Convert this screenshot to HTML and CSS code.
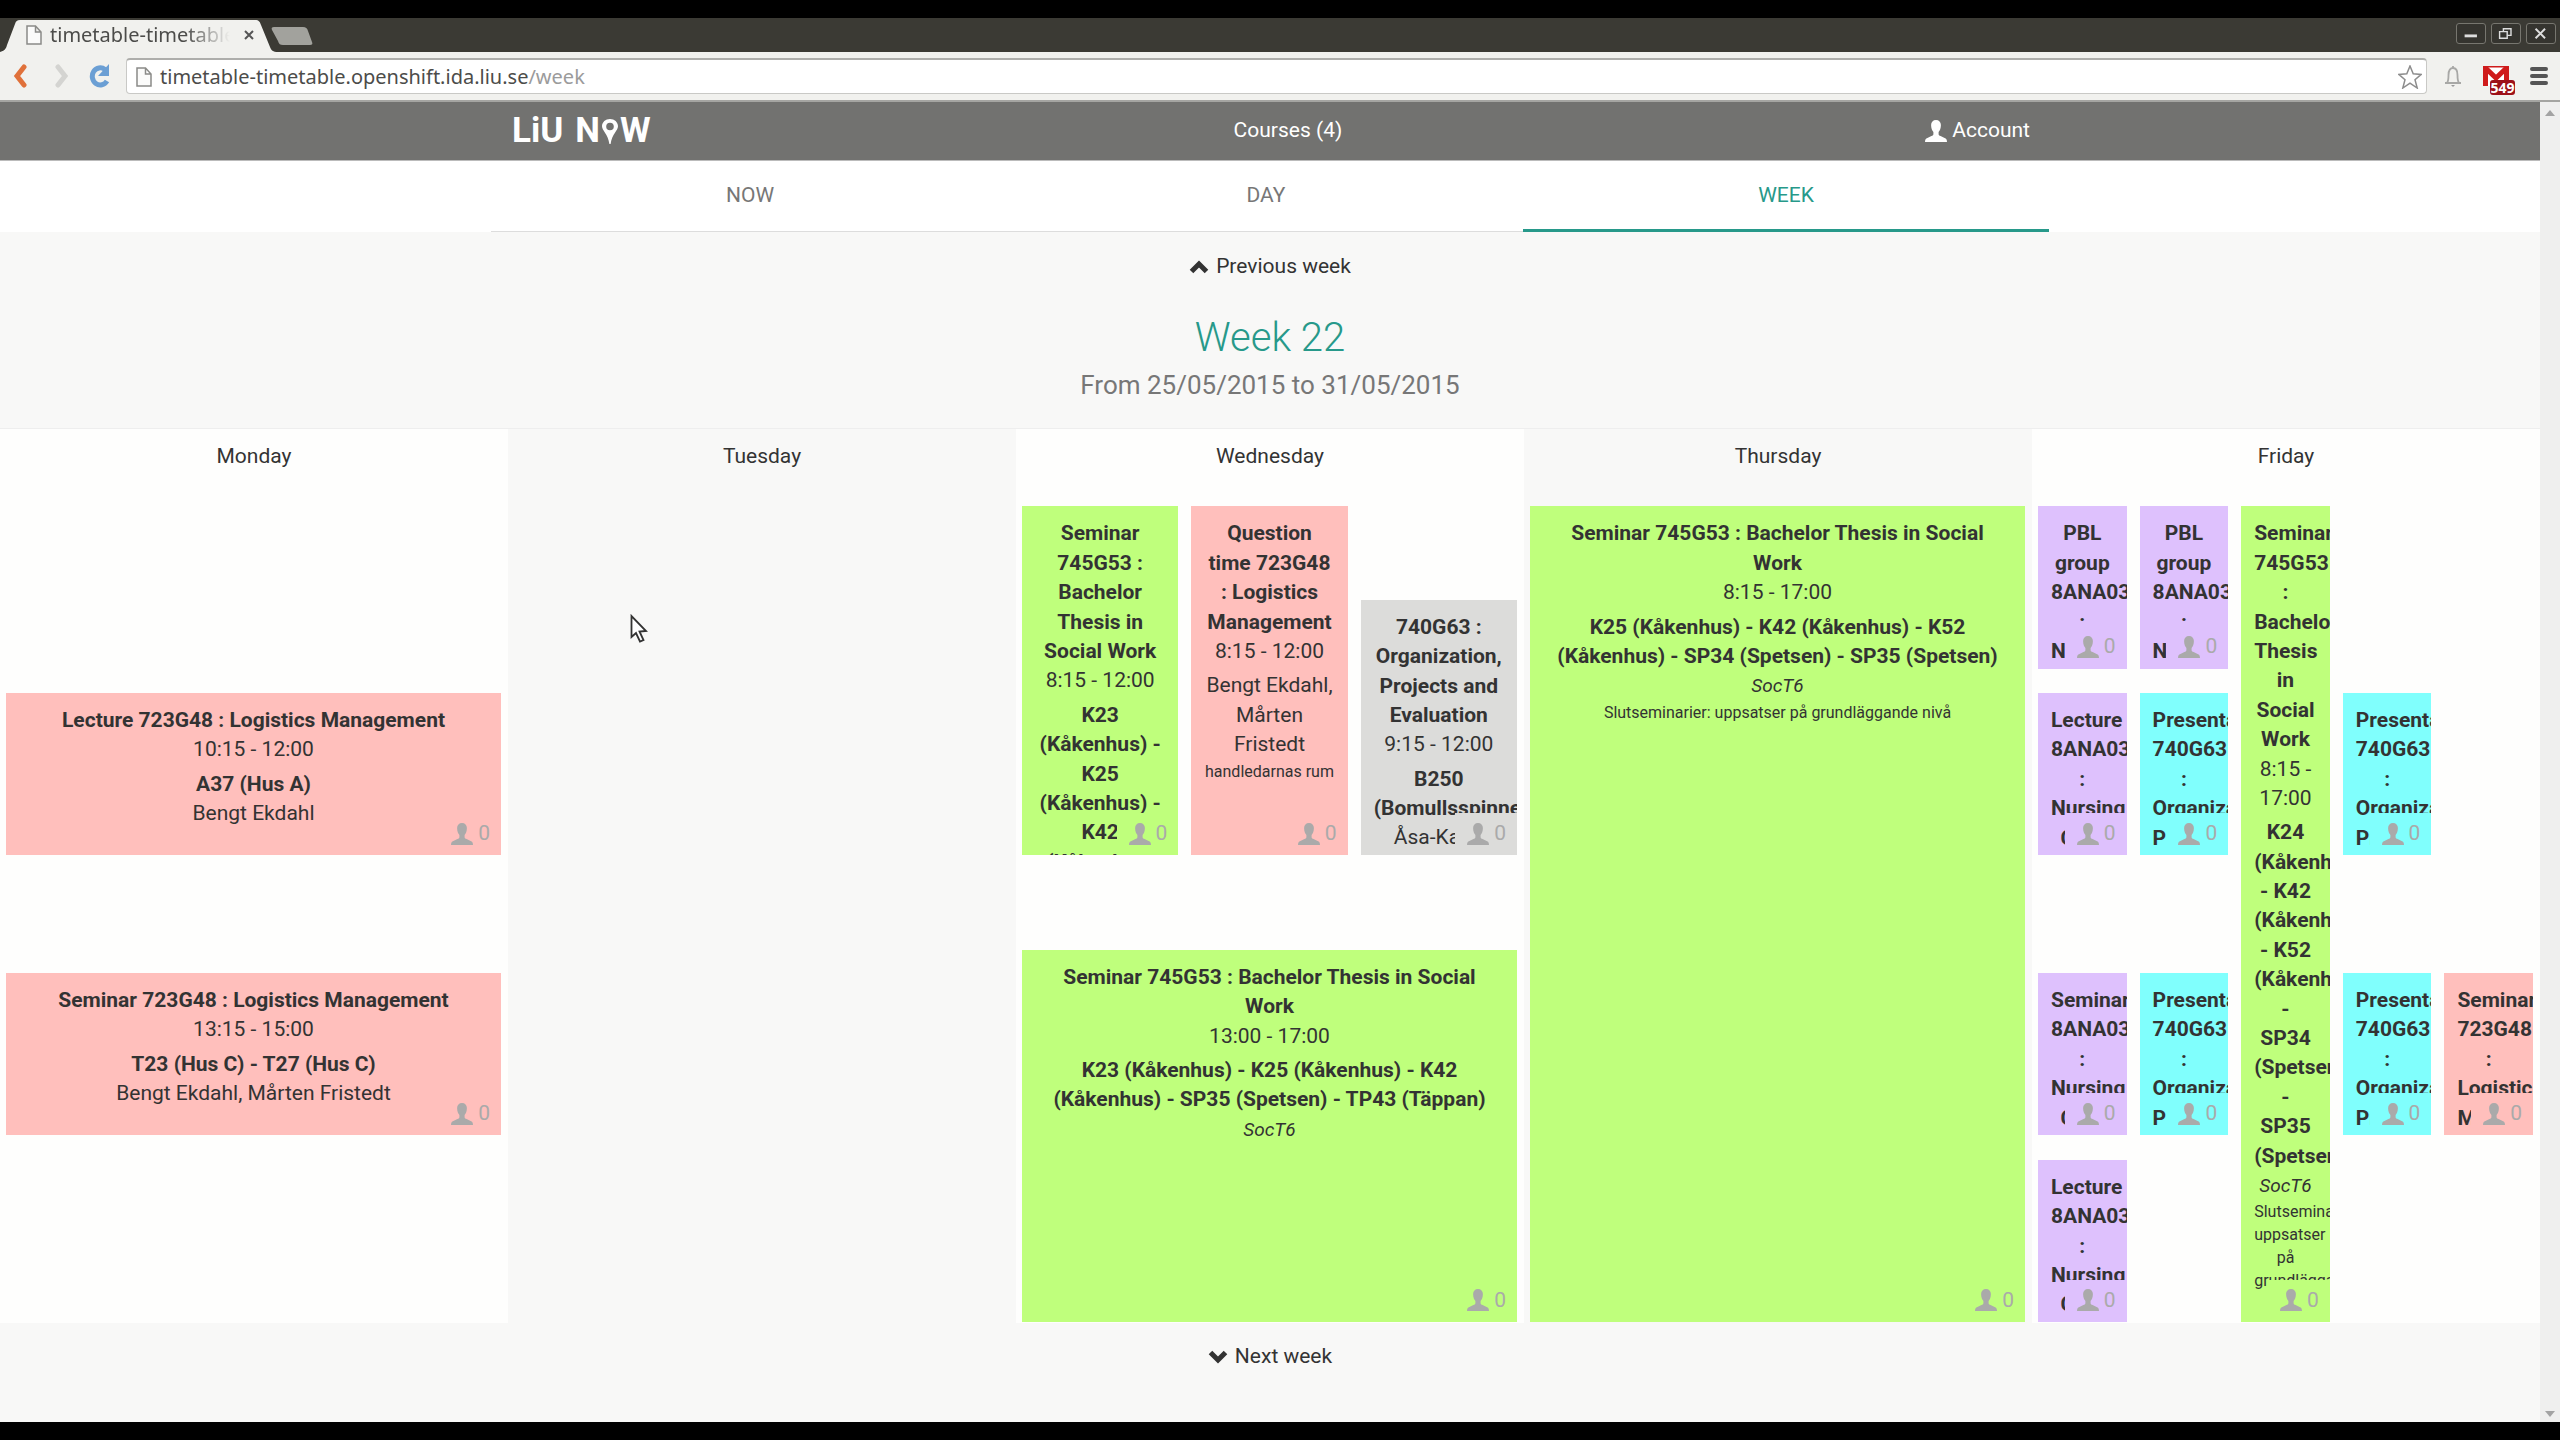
FILE: index.html
```html
<!DOCTYPE html>
<html lang="en">
<head>
<meta charset="utf-8">
<title>LiU Now</title>
<link rel="stylesheet" href="styles.css">
</head>
<body>
<svg class="defs" aria-hidden="true">
  <symbol id="user" viewBox="0 0 22 22"><path d="M11 0c3 0 4.900 2 4.900 5 0 3.200-1 5.600-2.300 7v2c0 1 .6 1.500 2 2.100l4 1.800c1.600.7 2.400 1.500 2.400 4.100H0c0-2.600.8-3.400 2.400-4.100l4-1.800c1.400-.6 2-1.100 2-2.100v-2C7.100 10.600 6.100 8.200 6.100 5c0-3 1.900-5 4.900-5z" fill="currentColor"/></symbol>
  <symbol id="page" viewBox="0 0 16 20"><path d="M1 1h8.500L15 7v12H1zM9.500 1v6H15" fill="#fbfbfa" stroke="#8b8b88" stroke-width="1.500"/></symbol>
</svg>

<div class="frame-edge"></div>
<header class="browser">
  <div class="titlebar">
    <div class="tab">
      <svg class="tab-shape" viewBox="0 0 278 34" preserveAspectRatio="none" aria-hidden="true"><path d="M0 34c4-1 6-3 7-7L15 6c1-3 2-4 5-4h235c4 0 5 2 6 5l9 22c1 3 3 5 8 5z" fill="#f1f1ee"/></svg>
      <svg class="page-icon"><use href="#page"/></svg>
      <span class="tab-title">timetable-timetable</span>
      <button class="tab-close" aria-label="Close tab"><svg viewBox="0 0 10 10"><path d="M1 1l8 8M9 1L1 9" stroke="#555" stroke-width="2"/></svg></button>
    </div>
    <button class="new-tab" aria-label="New tab"><svg viewBox="0 0 42 20"><path d="M3 1h29c3 0 4 1 5 4l4 11c1 2 0 3-2 3H12c-3 0-4-1-5-4L1 4c-1-2 0-3 2-3z" fill="#a2a29d"/></svg></button>
    <div class="window-buttons">
      <button aria-label="Minimise"><svg viewBox="0 0 28 20"><path d="M8 12.500h13" stroke="#ddd" stroke-width="3"/></svg></button>
      <button aria-label="Restore"><svg viewBox="0 0 28 20"><path d="M8 8h8v7H8zM12 8V5h8v7h-4" fill="none" stroke="#ddd" stroke-width="1.500"/></svg></button>
      <button aria-label="Close"><svg viewBox="0 0 28 20"><path d="M9 5l10 10M19 5L9 15" stroke="#ddd" stroke-width="2"/></svg></button>
    </div>
  </div>
  <div class="toolbar">
    <div class="nav-buttons">
      <button aria-label="Back"><svg viewBox="0 0 24 24"><path d="M15 3L8 12l7 9" fill="none" stroke="#e0713a" stroke-width="5" stroke-linecap="round"/></svg></button>
      <button aria-label="Forward"><svg viewBox="0 0 24 24"><path d="M10 3l7 9-7 9" fill="none" stroke="#d4d4d1" stroke-width="5" stroke-linecap="round"/></svg></button>
      <button aria-label="Reload"><svg viewBox="0 0 24 24"><path d="M18 5.500A8 8.500 0 1 0 20 17" fill="none" stroke="#6b9fd4" stroke-width="5"/><path d="M22 0v12H11z" fill="#6b9fd4"/></svg></button>
    </div>
    <div class="address">
      <svg class="page-icon"><use href="#page"/></svg>
      <a class="url" href="#">timetable-timetable.openshift.ida.liu.se<span>/week</span></a>
      <button aria-label="Bookmark"><svg viewBox="0 0 24 24"><path d="M12 1l3.200 7.800 8 .6-6.200 5.300 2.200 8.300L12 18.200 4.800 23 7 14.700.8 9.400l8-.6z" fill="#fff" stroke="#8d8d8d" stroke-width="1.500"/></svg></button>
    </div>
    <div class="extensions">
      <button aria-label="Notifications"><svg viewBox="0 0 24 24"><path d="M12 2v2M4 19h16M6 19c1.500-2 1.500-4 1.500-8 0-5 2-7 4.500-7s4.500 2 4.500 7c0 4 0 6 1.500 8" fill="none" stroke="#a8a8a6" stroke-width="1.800"/><path d="M10 21h4l-2 2z" fill="#999"/></svg></button>
      <button class="mail" aria-label="Mail"><svg viewBox="0 0 26 20"><path d="M0 0h26v20H0z" fill="#fff"/><path d="M2.500 20V2L13 12 23.500 2v18" fill="none" stroke="#cf1b1b" stroke-width="5"/><path d="M0 0h26v1.500H0z" fill="#cf1b1b"/></svg><span class="mail-count">549</span></button>
      <button aria-label="Menu"><svg viewBox="0 0 24 24"><path d="M5 5h14M5 12h14M5 19h14" stroke="#555" stroke-width="4" stroke-linecap="round"/></svg></button>
    </div>
  </div>
</header>

<div class="viewport">
  <div class="page">
    <nav class="navbar">
      <div class="container navbar-inner">
        <a class="logo" href="#" aria-label="LiU Now"><span>LiU</span><span class="logo-now">N<svg viewBox="0 0 16 25" aria-hidden="true"><path fill-rule="evenodd" d="M8 0c4.500 0 8 3.200 8 7.300C16 11.500 10 15 8.600 25H7.400C6 15 0 11.500 0 7.300 0 3.200 3.500 0 8 0zm0 3.700a3.800 3.800 0 1 0 0 7.600 3.800 3.800 0 0 0 0-7.600z" fill="currentColor"/></svg>W</span></a>
        <a href="#">Courses (4)</a>
        <a class="account" href="#"><svg class="user"><use href="#user"/></svg>Account</a>
      </div>
    </nav>
    <div class="views">
      <div class="container views-inner">
        <a class="now" href="#">NOW</a>
        <a class="today" href="#">DAY</a>
        <a class="this-week active" href="#">WEEK</a>
      </div>
    </div>
    <section class="week-head">
      <a class="step" href="#"><svg viewBox="0 0 20 14"><path d="M2.500 11.500L10 4l7.500 7.500" fill="none" stroke="currentColor" stroke-width="5"/></svg>Previous week</a>
      <h1>Week 22</h1>
      <p>From 25/05/2015 to 31/05/2015</p>
    </section>
    <main class="week">
      <section class="day">
        <h2>Monday</h2>
        <div class="slots">
          <article class="event full pink s1015 e1200"><h3>Lecture 723G48 : Logistics Management</h3><div>10:15 - 12:00</div><p><b>A37 (Hus A)</b><br>Bengt Ekdahl</p><span class="count"><svg class="user"><use href="#user"/></svg>0</span></article>
          <article class="event full pink s1315 e1500"><h3>Seminar 723G48 : Logistics Management</h3><div>13:15 - 15:00</div><p><b>T23 (Hus C) - T27 (Hus C)</b><br>Bengt Ekdahl, Mårten Fristedt</p><span class="count"><svg class="user"><use href="#user"/></svg>0</span></article>
        </div>
      </section>
      <section class="day">
        <h2>Tuesday</h2>
        <div class="slots"></div>
      </section>
      <section class="day">
        <h2>Wednesday</h2>
        <div class="slots three">
          <article class="event green s815 e1200"><h3>Seminar 745G53 : Bachelor Thesis in Social Work</h3><div>8:15 - 12:00</div><p><b>K23 (Kåkenhus) - K25 (Kåkenhus) - K42 (Kåkenhus)</b></p><span class="count"><svg class="user"><use href="#user"/></svg>0</span></article>
          <article class="event pink s815 e1200 c2"><h3>Question time 723G48 : Logistics Management</h3><div>8:15 - 12:00</div><p>Bengt Ekdahl, Mårten Fristedt</p><small>handledarnas rum</small><span class="count"><svg class="user"><use href="#user"/></svg>0</span></article>
          <article class="event grey s915 e1200 c3"><h3>740G63 : Organization, Projects and Evaluation</h3><div>9:15 - 12:00</div><p><b>B250 (Bomullsspinneriet)</b><br>Åsa-Karin</p><span class="count"><svg class="user"><use href="#user"/></svg>0</span></article>
          <article class="event full green s1300 e1700"><h3>Seminar 745G53 : Bachelor Thesis in Social Work</h3><div>13:00 - 17:00</div><p><b>K23 (Kåkenhus) - K25 (Kåkenhus) - K42 (Kåkenhus) - SP35 (Spetsen) - TP43 (Täppan)</b><br><i>SocT6</i></p><span class="count"><svg class="user"><use href="#user"/></svg>0</span></article>
        </div>
      </section>
      <section class="day">
        <h2>Thursday</h2>
        <div class="slots">
          <article class="event full green s815 e1700"><h3>Seminar 745G53 : Bachelor Thesis in Social Work</h3><div>8:15 - 17:00</div><p><b>K25 (Kåkenhus) - K42 (Kåkenhus) - K52 (Kåkenhus) - SP34 (Spetsen) - SP35 (Spetsen)</b><br><i>SocT6</i></p><small>Slutseminarier: uppsatser på grundläggande nivå</small><span class="count"><svg class="user"><use href="#user"/></svg>0</span></article>
        </div>
      </section>
      <section class="day">
        <h2>Friday</h2>
        <div class="slots five">
          <article class="event violet s815 e1000"><h3>PBL group 8ANA03 : Nursing</h3><span class="count"><svg class="user"><use href="#user"/></svg>0</span></article>
          <article class="event violet s815 e1000 c2"><h3>PBL group 8ANA03 : Nursing</h3><span class="count"><svg class="user"><use href="#user"/></svg>0</span></article>
          <article class="event green s815 e1700 c3"><h3>Seminar 745G53 : Bachelor Thesis in Social Work</h3><div>8:15 - 17:00</div><p><b>K24 (Kåkenhus) - K42 (Kåkenhus) - K52 (Kåkenhus) - SP34 (Spetsen) - SP35 (Spetsen)</b><br><i>SocT6</i></p><small>Slutseminarier: uppsatser på grundläggande</small><span class="count"><svg class="user"><use href="#user"/></svg>0</span></article>
          <article class="event violet s1015 e1200"><h3>Lecture 8ANA03 : Nursing Care</h3><span class="count"><svg class="user"><use href="#user"/></svg>0</span></article>
          <article class="event cyan s1015 e1200 c2"><h3>Presentation 740G63 : Organization, Projects</h3><span class="count"><svg class="user"><use href="#user"/></svg>0</span></article>
          <article class="event cyan s1015 e1200 c4"><h3>Presentation 740G63 : Organization, Projects</h3><span class="count"><svg class="user"><use href="#user"/></svg>0</span></article>
          <article class="event violet s1315 e1500"><h3>Seminar 8ANA03 : Nursing Care</h3><span class="count"><svg class="user"><use href="#user"/></svg>0</span></article>
          <article class="event cyan s1315 e1500 c2"><h3>Presentation 740G63 : Organization, Projects</h3><span class="count"><svg class="user"><use href="#user"/></svg>0</span></article>
          <article class="event cyan s1315 e1500 c4"><h3>Presentation 740G63 : Organization, Projects</h3><span class="count"><svg class="user"><use href="#user"/></svg>0</span></article>
          <article class="event pink s1315 e1500 c5"><h3>Seminar 723G48 : Logistics Management</h3><span class="count"><svg class="user"><use href="#user"/></svg>0</span></article>
          <article class="event violet s1515 e1700"><h3>Lecture 8ANA03 : Nursing Care</h3><span class="count"><svg class="user"><use href="#user"/></svg>0</span></article>
        </div>
      </section>
    </main>
    <footer class="week-foot">
      <a class="step" href="#"><svg viewBox="0 0 20 14"><path d="M2.500 2.500L10 10l7.500-7.500" fill="none" stroke="currentColor" stroke-width="5"/></svg>Next week</a>
    </footer>
  </div>
  <div class="scrollbar" aria-hidden="true">
    <svg viewBox="0 0 12 8"><path d="M1 7l5-6 5 6z" fill="#a3a3a3"/></svg>
    <svg viewBox="0 0 12 8"><path d="M1 1l5 6 5-6z" fill="#a3a3a3"/></svg>
  </div>
</div>
<div class="frame-edge"></div>

<svg class="cursor" viewBox="0 0 18 30" aria-hidden="true"><path d="M1.500 2v21l4.500-4 4 8.500 3.500-1.500-4-8.500 6.500-.5z" fill="#fff" stroke="#333" stroke-width="1.800"/></svg>
</body>
</html>
```

FILE: styles.css
```css
* { box-sizing: border-box; }
body {
  margin: 0;
  min-height: 100vh;
  display: flex;
  flex-direction: column;
  background: #f8f8f7;
  color: #333;
  font: 21px/1.4 Roboto, sans-serif;
}
a { color: inherit; text-decoration: none; }
button { padding: 0; border: 0; background: none; display: flex; font: inherit; }
h1, h2, h3, p { margin: 0; }
.defs { display: none; }
.frame-edge { height: 18px; background: #000; flex: none; }
.user { width: 22px; height: 22px; flex: none; }

/* Browser window */
.browser { font-family: "Noto Sans", sans-serif; font-size: 20px; color: #4c4c4a; }
.titlebar { height: 34px; display: flex; background: #3b3a34; }
.tab { width: 278px; position: relative; display: flex; align-items: center; padding: 0 24px 0 26px; }
.tab-shape { position: absolute; inset: 0; width: 100%; height: 100%; }
.page-icon { width: 16px; height: 20px; flex: none; position: relative; }
.tab-title {
  position: relative; flex: 1; margin: 0 14px 0 8px; overflow: hidden; white-space: nowrap;
  -webkit-mask-image: linear-gradient(to right, #000 75%, transparent);
  mask-image: linear-gradient(to right, #000 75%, transparent);
}
.tab-close { position: relative; width: 10px; }
.new-tab { width: 42px; margin: 8px 0 0 -7px; height: 20px; }
.window-buttons { margin: 5px 4px 0 auto; display: flex; gap: 5px; }
.window-buttons button { width: 30px; height: 21px; border: 1px solid #77766f; border-radius: 3px; background: #35342f; }
.toolbar { height: 50px; display: flex; align-items: center; background: #f1f1ee; border-bottom: 2px solid #a5a5a2; }
.nav-buttons { width: 126px; display: flex; gap: 15px; padding-left: 9px; }
.nav-buttons svg, .address button svg, .extensions svg { width: 24px; height: 24px; }
.address {
  flex: 1; height: 36px; display: flex; align-items: center; padding: 0 4px 0 9px;
  background: #fff; border: 1px solid #c9c9c6; border-top: 2px solid #aeaeab; border-radius: 4px;
}
.url { flex: 1; margin-left: 8px; }
.url span { color: #9b9b9b; }
.extensions { width: 133px; display: flex; align-items: center; gap: 18px; padding-left: 14px; }
.extensions .mail { position: relative; }
.extensions .mail svg { width: 26px; height: 20px; }
.mail-count {
  position: absolute; left: 7px; top: 14px; width: 25px; border-radius: 3px; background: #9d1119;
  color: #fff; font: bold 14px/15px "Open Sans", sans-serif; text-align: center;
}

/* Page */
.viewport { flex: 1; display: flex; }
.page { flex: 1; min-width: 0; }
.scrollbar { width: 20px; background: #efefee; display: flex; flex-direction: column; justify-content: space-between; align-items: center; padding: 7px 0 4px; }
.scrollbar svg { width: 12px; height: 8px; }
.container { width: 1558px; max-width: 100%; margin: 0 auto; }
.navbar { background: #727270; color: #fff; border-bottom: 1px solid #bbb; }
.navbar-inner { height: 58px; display: flex; align-items: center; justify-content: space-between; padding: 0 19px 0 21px; }
.logo, .logo-now { display: flex; align-items: center; }
.logo { gap: 12px; font-size: 35px; font-weight: 700; line-height: 58px; }
.logo svg { width: 16px; height: 25px; margin: 0 2px; }
.account { display: flex; align-items: center; gap: 5px; }
.views { background: #fff; }
.views-inner { display: flex; }
.views a { height: 71px; line-height: 68px; text-align: center; color: #777; border-bottom: 1px solid #ddd; }
.views .now { flex: 518; }
.views .today { flex: 514; }
.views .this-week { flex: 526; }
.views .active { color: #27998a; border-bottom: 3px solid #27998a; }
.week-head { padding: 20px 0 23px; text-align: center; border-bottom: 1px solid #eee; }
.step { display: inline-flex; align-items: center; gap: 7px; }
.step svg { width: 20px; height: 14px; }
h1 { margin-top: 29px; font-size: 40px; font-weight: 300; line-height: 54px; color: #27998a; }
.week-head p { font-size: 26px; line-height: 40px; color: #777; }
.week { display: grid; grid-template-columns: repeat(5, 1fr); }
.day:nth-child(odd) { background: #fefefd; }
.day h2 { height: 54px; font-size: inherit; font-weight: 400; line-height: 54px; text-align: center; }
.slots { height: 840px; display: grid; grid-template-rows: repeat(36, 1fr); grid-template-columns: minmax(0, 1fr); }
.three { grid-template-columns: repeat(3, minmax(0, 1fr)); }
.five { grid-template-columns: repeat(5, minmax(0, 1fr)); }
.week-foot { padding: 19px 0 40px; text-align: center; }

/* Events, one grid row per quarter of an hour from 8:00 */
.event { position: relative; overflow: hidden; min-height: 0; margin: 0 7px 1px 6px; padding: 13px 13px 0; text-align: center; grid-column: 1; }
.full { grid-column: 1 / -1; padding: 13px 16px 0; }
.event h3 { font-size: inherit; font-weight: 700; }
.event p { margin-top: 5px; }
.event i { font-size: 19px; }
.event small { display: block; font-size: 16px; line-height: 23px; }
.count {
  position: absolute; right: 0; bottom: 0; display: flex; align-items: center; gap: 5px;
  padding: 6px 11px 7px 12px; background: inherit; color: #aaa;
}
.c2 { grid-column: 2; }
.c3 { grid-column: 3; }
.c4 { grid-column: 4; }
.c5 { grid-column: 5; }
.s815 { grid-row-start: 2; }
.s915 { grid-row-start: 6; }
.s1015 { grid-row-start: 10; }
.s1300 { grid-row-start: 21; }
.s1315 { grid-row-start: 22; }
.s1515 { grid-row-start: 30; }
.e1000 { grid-row-end: 9; }
.e1200 { grid-row-end: 17; }
.e1500 { grid-row-end: 29; }
.e1700 { grid-row-end: 37; }
.pink { background: #ffbfbc; }
.green { background: #bfff7c; }
.grey { background: #dcdcda; }
.violet { background: #dec1fd; }
.cyan { background: #80fffd; }

.cursor { position: absolute; left: 630px; top: 614px; width: 18px; height: 30px; }
```
